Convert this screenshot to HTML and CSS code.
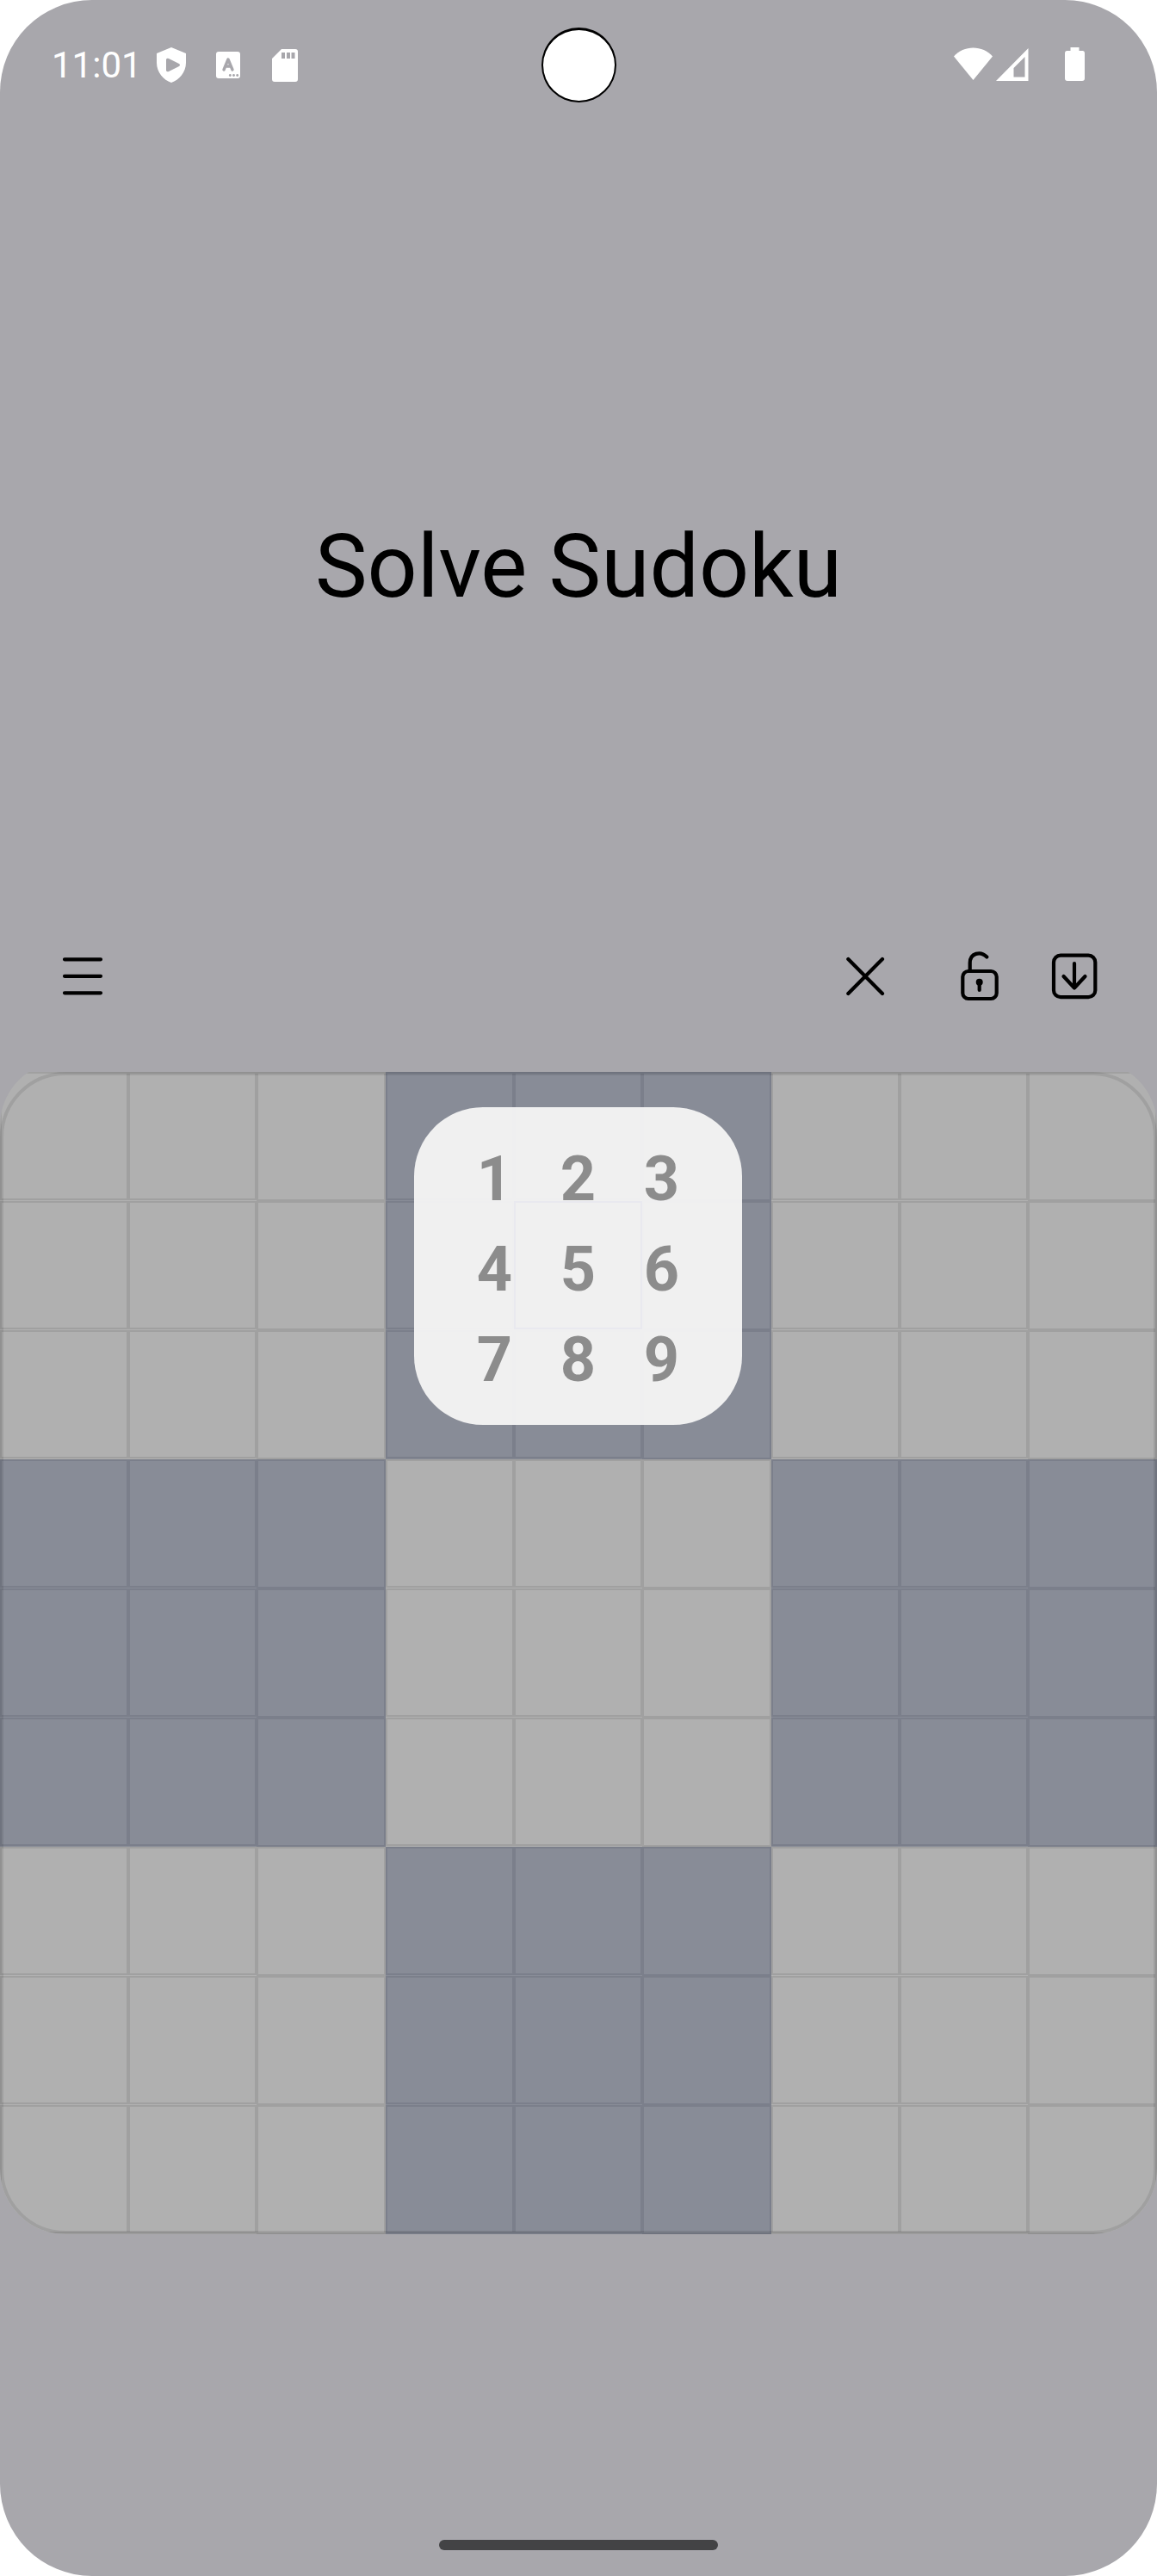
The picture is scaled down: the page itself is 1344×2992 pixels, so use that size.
FILE: index.html
```html
<!DOCTYPE html>
<html lang="en">
<head>
<meta charset="utf-8">
<title>Solve Sudoku</title>
<link rel="stylesheet" href="styles.css">
</head>
<body>
<main class="screen">
  <header class="status">
    <span class="clock">11:01</span>
    <svg class="status-left" width="170" height="50" viewBox="180 50 170 50" fill="#fff">
      <path fill-rule="evenodd" d="M199 55L216 62V73C216 84 208 93 199 96C190 93 182 84 182 73V62ZM193 69V82Q194 84 196 83L208 77Q210 75.500 208 74L196 68Q194 67 193 69Z"/>
      <rect x="251" y="60" width="28" height="31" rx="3"/>
      <path d="M260 81L265 69L270 81M262 77H268" fill="none" stroke="#a8a7ac" stroke-width="3.400" stroke-linecap="round" stroke-linejoin="round"/>
      <g fill="#a8a7ac"><circle cx="267.300" cy="87.500" r="1.400"/><circle cx="271.500" cy="87.500" r="1.400"/><circle cx="275.700" cy="87.500" r="1.400"/></g>
      <path fill-rule="evenodd" d="M327 57H343Q346 57 346 60V92Q346 95 343 95H319Q316 95 316 92V68ZM327 61V68H331V61ZM333 61V68H337V61ZM338.500 61V68H342.500V61Z"/>
    </svg>
    <span class="camera"></span>
    <svg class="status-right" width="160" height="50" viewBox="1104 50 160 50" fill="#fff">
      <path d="M1108 65.500C1119 52 1142 52 1153 65.500L1130.500 93Z"/>
      <path fill-rule="evenodd" d="M1157 94L1194.500 56V94ZM1177.500 79V89.500H1190.500V66Z"/>
      <path d="M1243.500 55H1253.500V59H1257.500Q1260 59 1260 62V91Q1260 94 1257 94H1240Q1237 94 1237 91V62Q1237 59 1239.500 59H1243.500Z"/>
    </svg>
  </header>
  <h1 class="title">Solve Sudoku</h1>
  <nav class="toolbar">
    <svg width="50" height="60" viewBox="71 1104 50 60"><path d="M75 1114.300H117M75 1133.800H117M75 1153.300H117"/></svg>
    <div class="actions">
      <svg width="50" height="60" viewBox="980 1104 50 60"><path d="M985.300 1114L1025 1154M1025 1114L985.300 1154"/></svg>
      <svg width="50" height="60" viewBox="1113 1104 50 60"><rect x="1118.300" y="1128" width="39.400" height="32" rx="6.500"/><path d="M1126.700 1127V1118.500C1126.700 1107 1139 1104 1146.300 1111.500M1137.700 1141V1150"/><circle class="solid" cx="1137.700" cy="1140.700" r="4"/></svg>
      <svg width="60" height="60" viewBox="1218 1104 60 60"><rect x="1224" y="1109.700" width="48.300" height="48.500" rx="8"/><path d="M1248 1119V1147.500M1235.500 1134L1248 1147.500L1260.500 1134"/></svg>
    </div>
  </nav>
  <section class="board">
    <div class="cells" id="cells"></div>
    <div class="frame"></div>
    <div class="picker">
      <span>1</span><span>2</span><span>3</span>
      <span>4</span><span>5</span><span>6</span>
      <span>7</span><span>8</span><span>9</span>
    </div>
    <div class="selection"></div>
  </section>
  <footer class="home"></footer>
</main>
<script src="board.js"></script>
</body>
</html>
```
FILE: board.js
```js
const cells = document.getElementById('cells');
for (let row = 0; row < 9; row++) {
  for (let col = 0; col < 9; col++) {
    const cell = document.createElement('div');
    const box = Math.floor(row / 3) + Math.floor(col / 3);
    cell.className = 'cell' + (box % 2 ? ' shaded' : '') + (col % 3 === 2 ? ' tall' : '');
    cells.appendChild(cell);
  }
}
```
FILE: styles.css
```css
* { box-sizing: border-box; }
body { margin: 0; background: #fff; font-family: Roboto, sans-serif; }
.screen {
  width: 1344px; height: 2992px; overflow: hidden;
  display: flex; flex-direction: column;
  background: #a8a7ac; border-radius: 107px;
}
.status { position: relative; height: 150px; display: flex; align-items: flex-start; padding: 50px 80px 0 60px; color: #fff; }
.clock { width: 120px; font-size: 42px; line-height: 51px; }
.status-right { margin-left: auto; }
.camera {
  position: absolute; left: 628.500px; top: 31.500px; width: 87px; height: 87px;
  border: solid #000; border-width: 3.500px 2.500px 2px; border-radius: 50%; background: #fff;
}
.title { margin: 0; height: 954px; padding-top: 447px; text-align: center; font-weight: 400; font-size: 102px; line-height: 122px; color: #000; }
.toolbar { height: 141px; padding: 0 66px 0 71px; display: flex; justify-content: space-between; align-items: flex-start; }
.toolbar svg { display: block; fill: none; stroke: #000; stroke-width: 4.200; stroke-linecap: round; stroke-linejoin: round; }
.toolbar .solid { fill: #000; stroke: none; }
.actions { display: flex; }
.actions svg + svg { margin-left: 83px; }
.actions svg + svg + svg { margin-left: 55px; }
.board { position: relative; height: 1350px; background: linear-gradient(#b0b0b0, #b0b0b0) 0 2px / 100% 1347px no-repeat; clip-path: inset(-13px 0 0 0 round 76px); }
.cells { display: grid; grid-template-columns: repeat(3, 149px 149px 150px); grid-auto-rows: 150px; }
.cell { height: 149px; background: #b0b0b0; border: 2px solid #a0a0a0; box-shadow: 0 1px 0 #b0b0b0; }
.shaded { background: #888c97; border-color: #7b7f8b; box-shadow: 0 1px 0 #888c97; }
.tall { height: 150px; box-shadow: none; }
.frame { position: absolute; inset: 0; border: 4px solid rgba(0, 0, 0, .09); border-radius: 76px; }
.picker {
  position: absolute; left: 481px; top: 41px; width: 381px; height: 369px;
  padding: 28px 45px; border-radius: 80px; background: rgba(242, 242, 242, .98);
  display: grid; grid-template-columns: repeat(3, 97px); grid-auto-rows: 105px;
  text-align: center; font-size: 72px; font-weight: 700; line-height: 112px; color: #8c8c8c;
}
.selection { position: absolute; left: 597px; top: 150px; width: 149px; height: 149px; border: 2px solid #e9e9ef; }
.home { width: 324px; height: 12px; margin: 355px auto 0; border-radius: 6px; background: #434345; }
```
